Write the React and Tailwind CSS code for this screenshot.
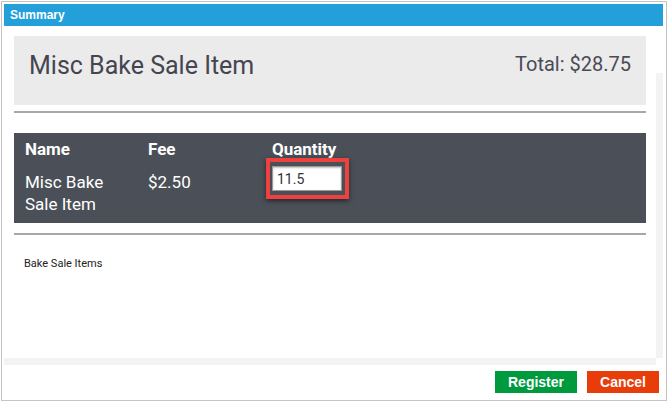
export default function App() {
  return (
    <div className="w-[668px] h-[402px] bg-white overflow-hidden" style={{ fontFamily: "Roboto, 'Liberation Sans', sans-serif" }}>
      <div className="ml-px mt-px w-[666px] h-[400px] border border-[#c4c4c4] p-[2px] flex flex-col">
        {/* Header */}
        <div className="h-[22px] bg-[#239fda] flex items-center pl-[6px] pr-2 mr-px">
          <span className="text-white text-[12px] font-bold font-['Liberation_Sans',Arial,sans-serif]">Summary</span>
        </div>

        {/* Body */}
        <div className="flex">
          <div className="w-[652px] h-[332px] p-[10px]">
            <div className="h-[69px] bg-[#ebebeb] flex items-start justify-between px-[15px]">
              <h1 className="mt-[16px] text-[25px] leading-[28px] text-[#454550]">Misc Bake Sale Item</h1>
              <div className="mt-[16px] text-[20px] leading-[24px] text-[#4a4a55]">Total: $28.75</div>
            </div>
            <div className="mt-[6px] h-[2px] bg-[#a8a8a8]" />

            {/* Table */}
            <div className="mt-[20px] bg-[#4b5058] text-white pt-[5px] pb-[7px] pl-[11px]">
              <div className="flex text-[17px] leading-[22px] font-bold">
                <div className="w-[123px]">Name</div>
                <div className="w-[124px]">Fee</div>
                <div>Quantity</div>
              </div>
              <div className="flex text-[17px] leading-[22.4px]">
                <div className="w-[123px] pt-[11px]">
                  Misc Bake
                  <br />
                  Sale Item
                </div>
                <div className="w-[118px] pt-[11px]">$2.50</div>
                <div className="mt-[-2px] w-[83px] h-[41px] border-4 border-[#ef4040] px-[2px] py-[4px] shadow-[0_2px_5px_rgba(0,0,0,0.55)]">
                  <input
                    readOnly
                    value="11.5"
                    className="w-[70px] h-[25px] bg-white border border-[#9a9a9a] shadow-[inset_0_1px_2px_rgba(0,0,0,0.25)] px-[4px] text-[14px] text-[#333] outline-none"
                  />
                </div>
              </div>
            </div>
            <div className="mt-[10px] h-[2px] bg-[#a8a8a8]" />

            <p className="mt-[22px] pl-[10px] text-[11px] leading-[13px] text-[#222]">Bake Sale Items</p>
          </div>
          <div className="mt-[47px] w-[7px] h-[285px] bg-[#f3f3f3]" />
        </div>
        <div className="w-[652px] h-[7px] bg-[#f3f3f3]" />

        {/* Footer */}
        <div className="flex justify-end gap-[10px] pt-[6px] pr-[5px] font-['Liberation_Sans',Arial,sans-serif]">
          <button className="w-[82px] h-[22px] bg-[#009a3e] text-white text-[14px] font-bold">Register</button>
          <button className="w-[72px] h-[22px] bg-[#e83c0a] text-white text-[14px] font-bold">Cancel</button>
        </div>
      </div>
    </div>
  );
}
